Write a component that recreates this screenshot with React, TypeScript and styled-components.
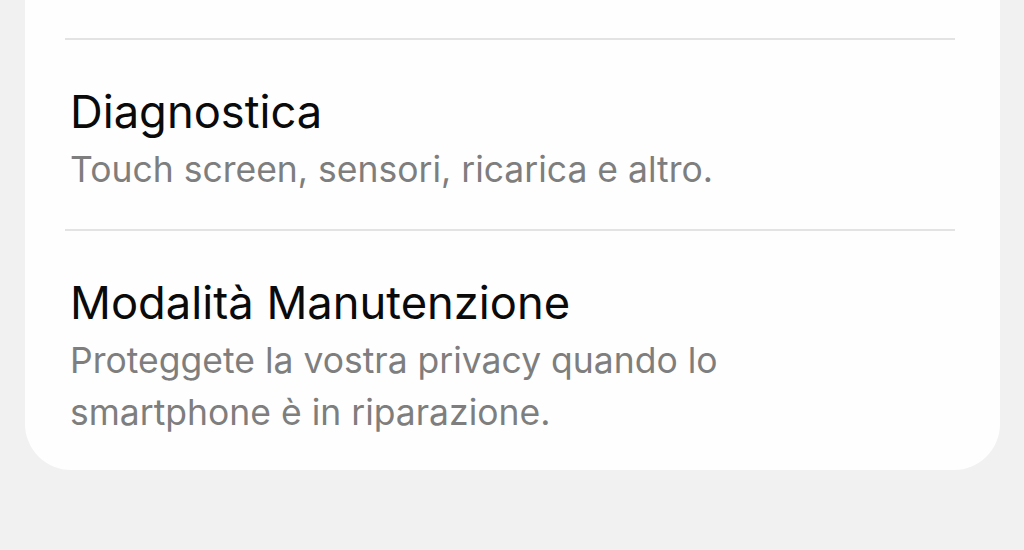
import React from "react";
import styled, { createGlobalStyle } from "styled-components";

const Global = createGlobalStyle`
  html, body { margin: 0; padding: 0; background: #f1f1f1; }
  body { font-family: Inter, "Noto Sans", sans-serif; }
`;

const Page = styled.div`
  width: 1024px;
  height: 550px;
  overflow: hidden;
  background: #f1f1f1;
  padding: 0 24px 0 25px;
  box-sizing: border-box;
`;

const Card = styled.div`
  background: #fefefe;
  border-radius: 0 0 46px 46px;
  padding: 38px 45px 0 40px;
  height: 470px;
  box-sizing: border-box;
`;

const Divider = styled.div`
  height: 2px;
  background: #e3e3e3;
`;

const Item = styled.div`
  padding: 0 5px;
  height: 189px;
  box-sizing: border-box;
  display: flex;
  flex-direction: column;
`;

const Title = styled.div`
  font-size: 45.3px;
  line-height: 64px;
  color: #0a0a0a;
  margin-top: 40px;
`;

const Subtitle = styled.div`
  font-size: 35.5px;
  line-height: 52px;
  color: #7e7e7e;
  max-width: 730px;
`;

export default function App() {
  return (
    <>
      <Global />
      <Page>
        <Card>
          <Divider />
          <Item>
            <Title>Diagnostica</Title>
            <Subtitle>Touch screen, sensori, ricarica e altro.</Subtitle>
          </Item>
          <Divider />
          <Item>
            <Title>Modalità Manutenzione</Title>
            <Subtitle>Proteggete la vostra privacy quando lo smartphone è in riparazione.</Subtitle>
          </Item>
        </Card>
      </Page>
    </>
  );
}
